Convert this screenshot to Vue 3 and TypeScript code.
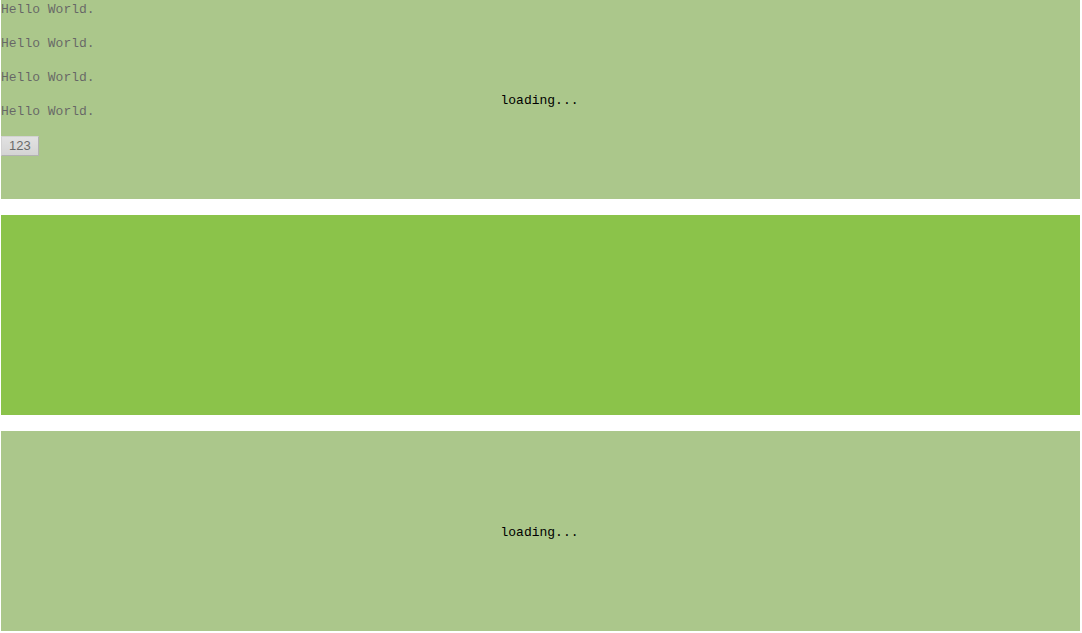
<script setup lang="ts">
interface Panel {
  id: number
  loading: boolean
  lines: string[]
  action?: string
}

const greeting = 'Hello World.'

const panels: Panel[] = [
  { id: 1, loading: true, lines: [greeting, greeting, greeting, greeting], action: '123' },
  { id: 2, loading: false, lines: [] },
  { id: 3, loading: true, lines: [] },
]
</script>

<template>
  <main class="page">
    <section v-for="panel in panels" :key="panel.id" class="panel" :aria-busy="panel.loading">
      <p v-for="(line, i) in panel.lines" :key="i" class="line">{{ line }}</p>
      <button v-if="panel.action" type="button" class="action">{{ panel.action }}</button>
      <div v-if="panel.loading" class="mask" role="status">loading...</div>
    </section>
  </main>
</template>

<style>
body {
  margin: 0;
  background: #fff;
}
</style>

<style scoped>
.page {
  display: flex;
  flex-direction: column;
  gap: 16px;
  margin-top: -1px;
  padding: 0 2px 2px 1px;
  font: 13px/20px "Liberation Mono", monospace;
  color: #000;
}

.panel {
  position: relative;
  display: flex;
  flex-direction: column;
  align-items: flex-start;
  gap: 14px;
  box-sizing: border-box;
  min-height: 200px;
  padding-top: 1px;
  background: #8bc34a;
}

.line {
  margin: 0;
}

.action {
  padding: 0 7px;
  border: 1px solid;
  border-color: #d8d8d8 #989898 #989898 #d8d8d8;
  border-radius: 0;
  background: linear-gradient(#f8f8f8, #ddd);
  color: #000;
  font: 13px/18px "Liberation Sans", Arial, sans-serif;
}

.mask {
  position: absolute;
  inset: 0;
  display: flex;
  align-items: center;
  justify-content: center;
  padding: 4px 2px 0 0;
  background: rgba(204, 204, 204, 0.5);
}
</style>
